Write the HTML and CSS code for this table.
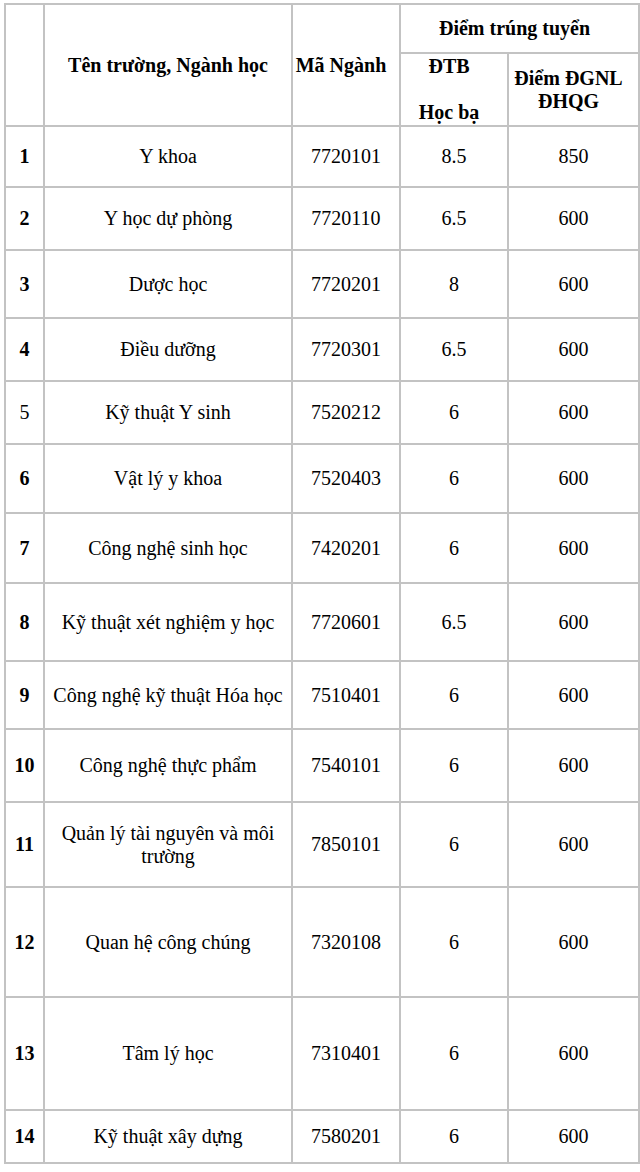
FILE: index.html
```html
<!DOCTYPE html>
<html lang="vi">
<head>
<meta charset="utf-8">
<title>Điểm trúng tuyển</title>
<link rel="stylesheet" href="styles.css">
</head>
<body>
<table class="scores">
  <colgroup>
    <col class="c-no">
    <col class="c-name">
    <col class="c-code">
    <col class="c-gpa">
    <col class="c-dgnl">
  </colgroup>
  <thead>
    <tr class="h1">
      <th rowspan="2"></th>
      <th rowspan="2">Tên trường, Ngành học</th>
      <th rowspan="2" class="code">Mã Ngành</th>
      <th colspan="2" class="shift">Điểm trúng tuyển</th>
    </tr>
    <tr class="h2">
      <th class="shift">ĐTB<br><br>Học bạ</th>
      <th class="shift">Điểm ĐGNL<br>ĐHQG</th>
    </tr>
  </thead>
  <tbody>
    <tr><td class="no">1</td><td>Y khoa</td><td>7720101</td><td>8.5</td><td>850</td></tr>
    <tr><td class="no">2</td><td>Y học dự phòng</td><td>7720110</td><td>6.5</td><td>600</td></tr>
    <tr><td class="no">3</td><td>Dược học</td><td>7720201</td><td>8</td><td>600</td></tr>
    <tr><td class="no">4</td><td>Điều dưỡng</td><td>7720301</td><td>6.5</td><td>600</td></tr>
    <tr><td class="no plain">5</td><td>Kỹ thuật Y sinh</td><td>7520212</td><td>6</td><td>600</td></tr>
    <tr><td class="no">6</td><td>Vật lý y khoa</td><td>7520403</td><td>6</td><td>600</td></tr>
    <tr><td class="no">7</td><td>Công nghệ sinh học</td><td>7420201</td><td>6</td><td>600</td></tr>
    <tr><td class="no">8</td><td>Kỹ thuật xét nghiệm y học</td><td>7720601</td><td>6.5</td><td>600</td></tr>
    <tr><td class="no">9</td><td>Công nghệ kỹ thuật Hóa học</td><td>7510401</td><td>6</td><td>600</td></tr>
    <tr><td class="no">10</td><td>Công nghệ thực phẩm</td><td>7540101</td><td>6</td><td>600</td></tr>
    <tr><td class="no">11</td><td>Quản lý tài nguyên và môi trường</td><td>7850101</td><td>6</td><td>600</td></tr>
    <tr><td class="no">12</td><td>Quan hệ công chúng</td><td>7320108</td><td>6</td><td>600</td></tr>
    <tr><td class="no">13</td><td>Tâm lý học</td><td>7310401</td><td>6</td><td>600</td></tr>
    <tr><td class="no">14</td><td>Kỹ thuật xây dựng</td><td>7580201</td><td>6</td><td>600</td></tr>
  </tbody>
</table>
</body>
</html>
```

FILE: styles.css
```css
html, body {
  margin: 0;
  padding: 0;
  background: #ffffff;
}

body {
  padding: 3px 0 0 4px;
  font-family: "Liberation Serif", "Times New Roman", serif;
  font-size: 20px;
  line-height: 23px;
  color: #000000;
}

.scores {
  border-collapse: collapse;
  table-layout: fixed;
  width: 634px;
}

.c-no { width: 39px; }
.c-name { width: 248px; }
.c-code { width: 108px; }
.c-gpa { width: 108px; }
.c-dgnl { width: 131px; }

.scores th,
.scores td {
  border: 2px solid #c3c3c3;
  padding: 0 4px;
  text-align: center;
  vertical-align: middle;
}

.scores th {
  font-weight: bold;
}

.scores th.shift {
  padding-right: 14px;
}

.scores th.code {
  white-space: nowrap;
  padding: 0 12px 0 2px;
}

.scores td.no {
  font-weight: bold;
  padding: 0;
}

.scores td.plain {
  font-weight: normal;
}

.h1 { height: 49px; }
.h2 { height: 73px; }

tbody tr:nth-child(1) { height: 61px; }
tbody tr:nth-child(2) { height: 63px; }
tbody tr:nth-child(3) { height: 68px; }
tbody tr:nth-child(4) { height: 63px; }
tbody tr:nth-child(5) { height: 63px; }
tbody tr:nth-child(6) { height: 69px; }
tbody tr:nth-child(7) { height: 70px; }
tbody tr:nth-child(8) { height: 78px; }
tbody tr:nth-child(9) { height: 68px; }
tbody tr:nth-child(10) { height: 73px; }
tbody tr:nth-child(11) { height: 85px; }
tbody tr:nth-child(12) { height: 110px; }
tbody tr:nth-child(13) { height: 113px; }
tbody tr:nth-child(14) { height: 53px; }
```
